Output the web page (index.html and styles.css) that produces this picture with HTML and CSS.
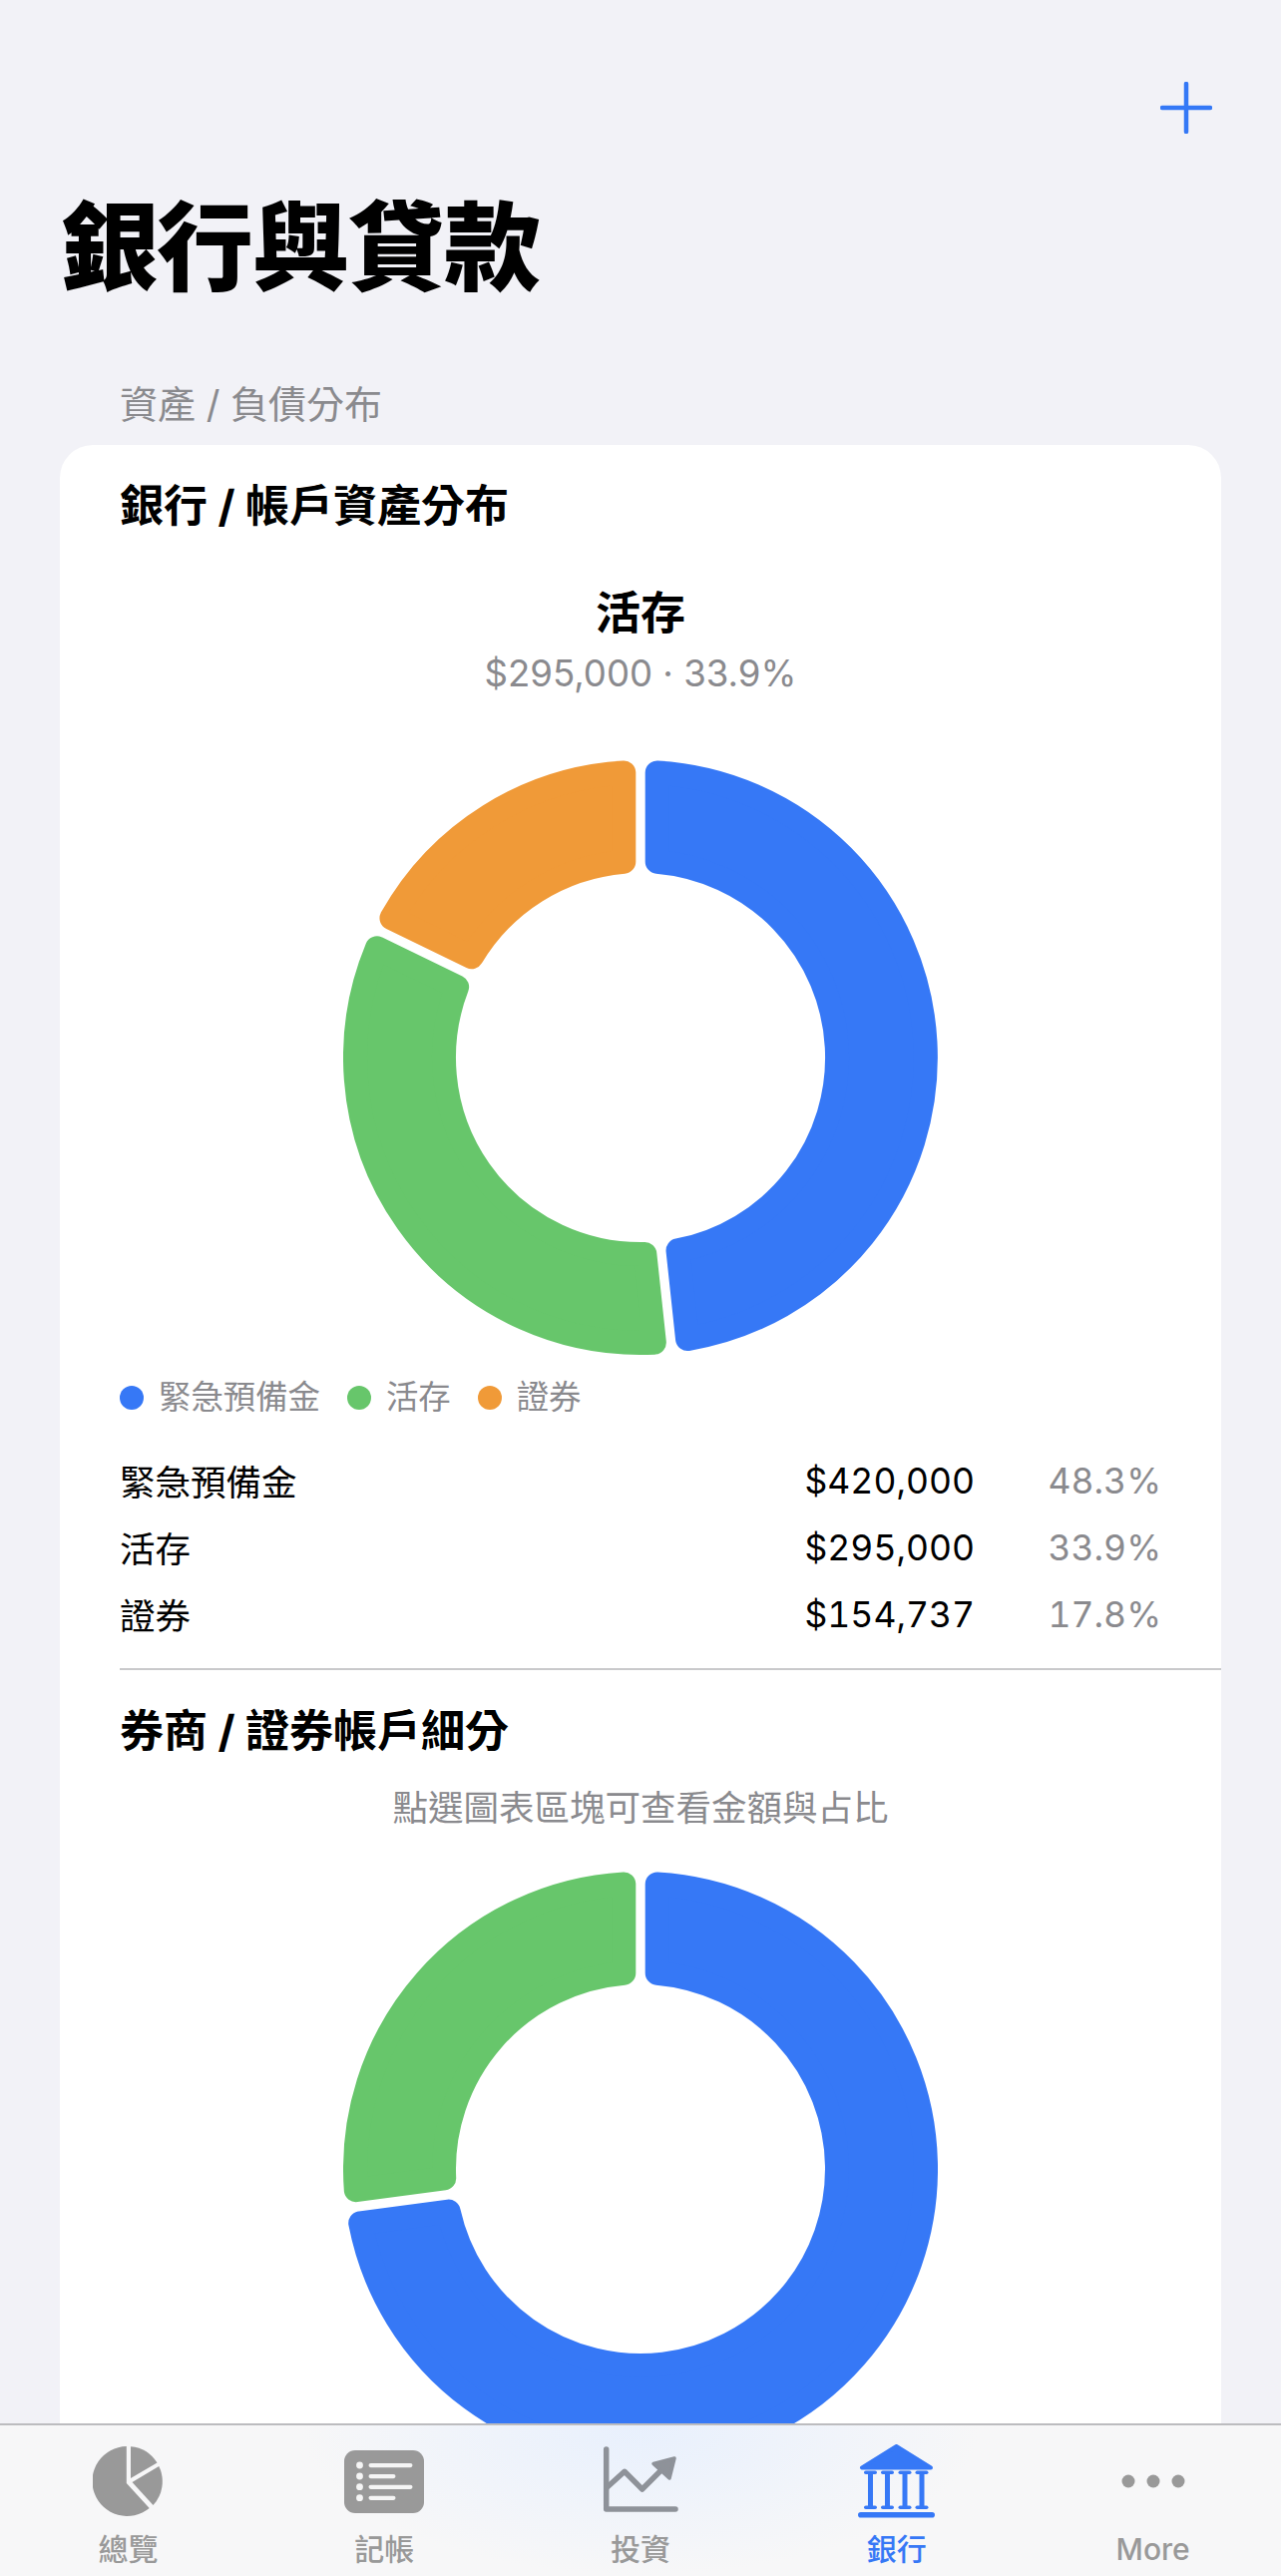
FILE: index.html
```html
<!DOCTYPE html>
<html lang="zh-Hant">
<head>
<meta charset="utf-8">
<title>銀行與貸款</title>
<link rel="stylesheet" href="styles.css">
</head>
<body>
<div class="screen">
  <main class="scroll">
    <div class="nav">
      <svg class="plus" viewBox="0 0 52 52"><path d="M26 2V50M2 26H50"/></svg>
    </div>
    <h1 class="large-title">銀行與貸款</h1>
    <div class="section-label">資產 / 負債分布</div>
    <section class="card">
      <h2 class="card-title">銀行 / 帳戶資產分布</h2>
      <div class="selected-name">活存</div>
      <div class="selected-value">$295,000 · 33.9%</div>
      <svg class="donut donut-first" viewBox="-298 -298 596 596">
        <path class="seg blue" d="M16.7 -285.5A286 286 0 0 1 47.03 282.09L37.53 193.4A197 197 0 0 0 16.7 -196.3Z"/>
        <path class="seg green" d="M13.83 285.65A286 286 0 0 1 -264.11 -109.74L-183.87 -70.76A197 197 0 0 0 4.33 196.96Z"/>
        <path class="seg orange" d="M-249.51 -139.78A286 286 0 0 1 -16.7 -285.5L-16.7 -196.3A197 197 0 0 0 -169.27 -100.8Z"/>
      </svg>
      <div class="legend">
        <span class="legend-item"><i class="dot dot-blue"></i>緊急預備金</span>
        <span class="legend-item"><i class="dot dot-green"></i>活存</span>
        <span class="legend-item"><i class="dot dot-orange"></i>證券</span>
      </div>
      <div class="rows">
        <div class="row"><span class="row-name">緊急預備金</span><span class="row-amount">$420,000</span><span class="row-pct">48.3%</span></div>
        <div class="row"><span class="row-name">活存</span><span class="row-amount">$295,000</span><span class="row-pct">33.9%</span></div>
        <div class="row"><span class="row-name">證券</span><span class="row-amount">$154,737</span><span class="row-pct">17.8%</span></div>
      </div>
      <hr class="divider">
      <h2 class="card-title second">券商 / 證券帳戶細分</h2>
      <div class="hint">點選圖表區塊可查看金額與占比</div>
      <svg class="donut donut-second" viewBox="-298 -298 596 596">
        <path class="seg blue" d="M16.7 -285.5A286 286 0 1 1 -280.78 54.32L-192.36 42.52A197 197 0 1 0 16.7 -196.3Z"/>
        <path class="seg green" d="M-285.2 21.22A286 286 0 0 1 -16.7 -285.5L-16.7 -196.3A197 197 0 0 0 -196.78 9.42Z"/>
      </svg>
    </section>
  </main>
  <nav class="tabbar">
    <div class="tab">
      <div class="tab-icon">
        <svg class="icon-pie" viewBox="0 0 70 70">
          <path d="M33.8 0A35 35 0 1 0 56.7 62L33.8 37Z"/>
          <path d="M38 0.2A35 35 0 0 1 64.5 16.5L38 32Z"/>
          <path d="M66.3 20A35 35 0 0 1 60.5 59L39.5 36Z"/>
        </svg>
      </div>
      <span class="tab-label">總覽</span>
    </div>
    <div class="tab">
      <div class="tab-icon">
        <svg class="icon-list" viewBox="0 0 80 63">
          <rect class="list-bg" width="80" height="63" rx="11"/>
          <circle class="list-ink" cx="15.5" cy="15" r="3.4"/>
          <circle class="list-ink" cx="15.5" cy="26" r="3.4"/>
          <circle class="list-ink" cx="15.5" cy="36.7" r="3.4"/>
          <circle class="list-ink" cx="15.5" cy="47.7" r="3.4"/>
          <rect class="list-ink" x="24.5" y="13" width="44" height="4.2" rx="2.1"/>
          <rect class="list-ink" x="24.5" y="24" width="27" height="4.2" rx="2.1"/>
          <rect class="list-ink" x="24.5" y="34.7" width="44" height="4.2" rx="2.1"/>
          <rect class="list-ink" x="24.5" y="45.7" width="27" height="4.2" rx="2.1"/>
        </svg>
      </div>
      <span class="tab-label">記帳</span>
    </div>
    <div class="tab">
      <div class="tab-icon">
        <svg class="icon-chart" viewBox="0 0 80 70">
          <path class="chart-line" d="M6.7 3V63H76"/>
          <path class="chart-line" d="M7.3 41.3L25 25.3L42.7 43L61.7 24"/>
          <path class="chart-head" d="M54 17.5L75 12L70 32Z"/>
        </svg>
      </div>
      <span class="tab-label">投資</span>
    </div>
    <div class="tab tab-active">
      <div class="tab-icon">
        <svg class="icon-bank" viewBox="0 0 77 74">
          <path class="bank-roof" d="M38.5 2L4 23.5H73Z"/>
          <g class="bank-col">
            <rect x="6" y="26.5" width="13" height="3.6" rx="1.8"/>
            <rect x="10" y="28" width="5" height="35"/>
            <rect x="6" y="61.5" width="13" height="3.6" rx="1.8"/>
            <rect x="23" y="26.5" width="13" height="3.6" rx="1.8"/>
            <rect x="27" y="28" width="5" height="35"/>
            <rect x="23" y="61.5" width="13" height="3.6" rx="1.8"/>
            <rect x="40.5" y="26.5" width="13" height="3.6" rx="1.8"/>
            <rect x="44.5" y="28" width="5" height="35"/>
            <rect x="40.5" y="61.5" width="13" height="3.6" rx="1.8"/>
            <rect x="57.5" y="26.5" width="13" height="3.6" rx="1.8"/>
            <rect x="61.5" y="28" width="5" height="35"/>
            <rect x="57.5" y="61.5" width="13" height="3.6" rx="1.8"/>
            <rect x="0" y="68" width="77" height="5.6" rx="2.8"/>
          </g>
        </svg>
      </div>
      <span class="tab-label">銀行</span>
    </div>
    <div class="tab">
      <div class="tab-icon">
        <svg class="icon-more" viewBox="0 0 64 14">
          <circle cx="7" cy="7" r="6.5"/>
          <circle cx="32" cy="7" r="6.5"/>
          <circle cx="57" cy="7" r="6.5"/>
        </svg>
      </div>
      <span class="tab-label">More</span>
    </div>
  </nav>
</div>
</body>
</html>
```
FILE: styles.css
```css
* { box-sizing: border-box; }
html, body { margin: 0; padding: 0; }
body {
  font-family: Inter, "Noto Sans CJK TC", sans-serif;
  background: #f2f2f7;
  color: #000;
}
.screen {
  position: relative;
  width: 1284px;
  height: 2582px;
  overflow: hidden;
  background: #f2f2f7;
}
.scroll { padding: 82px 60px 0; }
.nav { display: flex; justify-content: flex-end; padding-right: 9px; }
.plus { display: block; width: 52px; height: 52px; }
.plus path { fill: none; stroke: #3478f6; stroke-width: 4.5; stroke-linecap: round; }
.large-title {
  margin: 54px 0 0 1px;
  font-size: 97px;
  line-height: 120px;
  font-weight: 900;
  letter-spacing: -1px;
}
.section-label {
  margin: 74px 0 0 60px;
  font-size: 38px;
  line-height: 46px;
  color: #8a8a8e;
}
.card {
  margin-top: 18px;
  height: 2200px;
  padding-top: 31px;
  background: #fff;
  border-radius: 33px 33px 0 0;
}
.card-title {
  margin: 0 0 0 60px;
  font-size: 44px;
  line-height: 60px;
  font-weight: 700;
}
.card-title.second { margin-top: 31px; }
.selected-name {
  margin-top: 48px;
  text-align: center;
  font-size: 45px;
  line-height: 60px;
  font-weight: 700;
}
.selected-value {
  margin-top: 8px;
  text-align: center;
  font-size: 36.6px;
  line-height: 44px;
  color: #8a8a8e;
}
.donut { display: block; width: 596px; height: 596px; margin: 0 auto; }
.donut-first { margin-top: 65px; }
.donut-second { margin-top: 41px; }
.seg { stroke-width: 24; stroke-linejoin: round; }
.seg.blue { fill: #3678f6; stroke: #3678f6; }
.seg.green { fill: #67c66b; stroke: #67c66b; }
.seg.orange { fill: #f09a38; stroke: #f09a38; }
.legend {
  display: flex;
  gap: 27px;
  margin: 21px 0 0 60px;
  font-size: 32.4px;
  line-height: 44px;
  color: #8a8a8e;
}
.legend-item { display: flex; align-items: center; gap: 15px; }
.dot { display: block; width: 24px; height: 24px; border-radius: 50%; }
.dot-blue { background: #3678f6; }
.dot-green { background: #67c66b; }
.dot-orange { background: #f09a38; }
.rows { margin: 28px 60px 0 60px; }
.row {
  display: flex;
  align-items: center;
  height: 67px;
  font-size: 35.5px;
  font-variant-numeric: tabular-nums;
}
.row-name { flex: 1; padding-bottom: 3px; }
.row-pct { width: 187px; text-align: right; color: #8a8a8e; }
.divider {
  margin: 20px 0 0 60px;
  border: 0;
  height: 2px;
  background: #c9c9cb;
}
.hint {
  margin-top: 26px;
  text-align: center;
  font-size: 35.5px;
  line-height: 44px;
  color: #8a8a8e;
}
.tabbar {
  position: absolute;
  left: 0;
  right: 0;
  bottom: 0;
  height: 153px;
  display: grid;
  grid-template-columns: repeat(5, 1fr);
  padding-top: 19px;
  border-top: 2px solid #bcbcbf;
  background:
    radial-gradient(ellipse 340px 150px at 50% 0, #e8f0fd, rgba(232, 240, 253, 0)),
    #f7f7f8;
}
.tab { display: flex; flex-direction: column; align-items: center; color: #999; }
.tab-active { color: #3678f6; }
.tab-icon { display: flex; align-items: center; justify-content: center; height: 74px; }
.tab-label { margin-top: 16px; font-size: 30px; line-height: 30px; font-weight: 500; }
.icon-pie { display: block; width: 70px; height: 70px; fill: #999; }
.icon-list { display: block; width: 80px; height: 63px; }
.list-bg { fill: #999; }
.list-ink { fill: #f5f5f5; }
.icon-chart { display: block; width: 80px; height: 70px; margin-left: -2px; }
.chart-line { fill: none; stroke: #8e9299; stroke-width: 5.5; stroke-linecap: round; stroke-linejoin: round; }
.chart-head { fill: #8e9299; stroke: #8e9299; stroke-width: 3.5; stroke-linejoin: round; }
.icon-bank { display: block; width: 77px; height: 74px; }
.bank-roof { fill: #3678f6; stroke: #3678f6; stroke-width: 4; stroke-linejoin: round; }
.bank-col { fill: #3678f6; }
.icon-more { display: block; width: 64px; height: 14px; fill: #999; }
```
